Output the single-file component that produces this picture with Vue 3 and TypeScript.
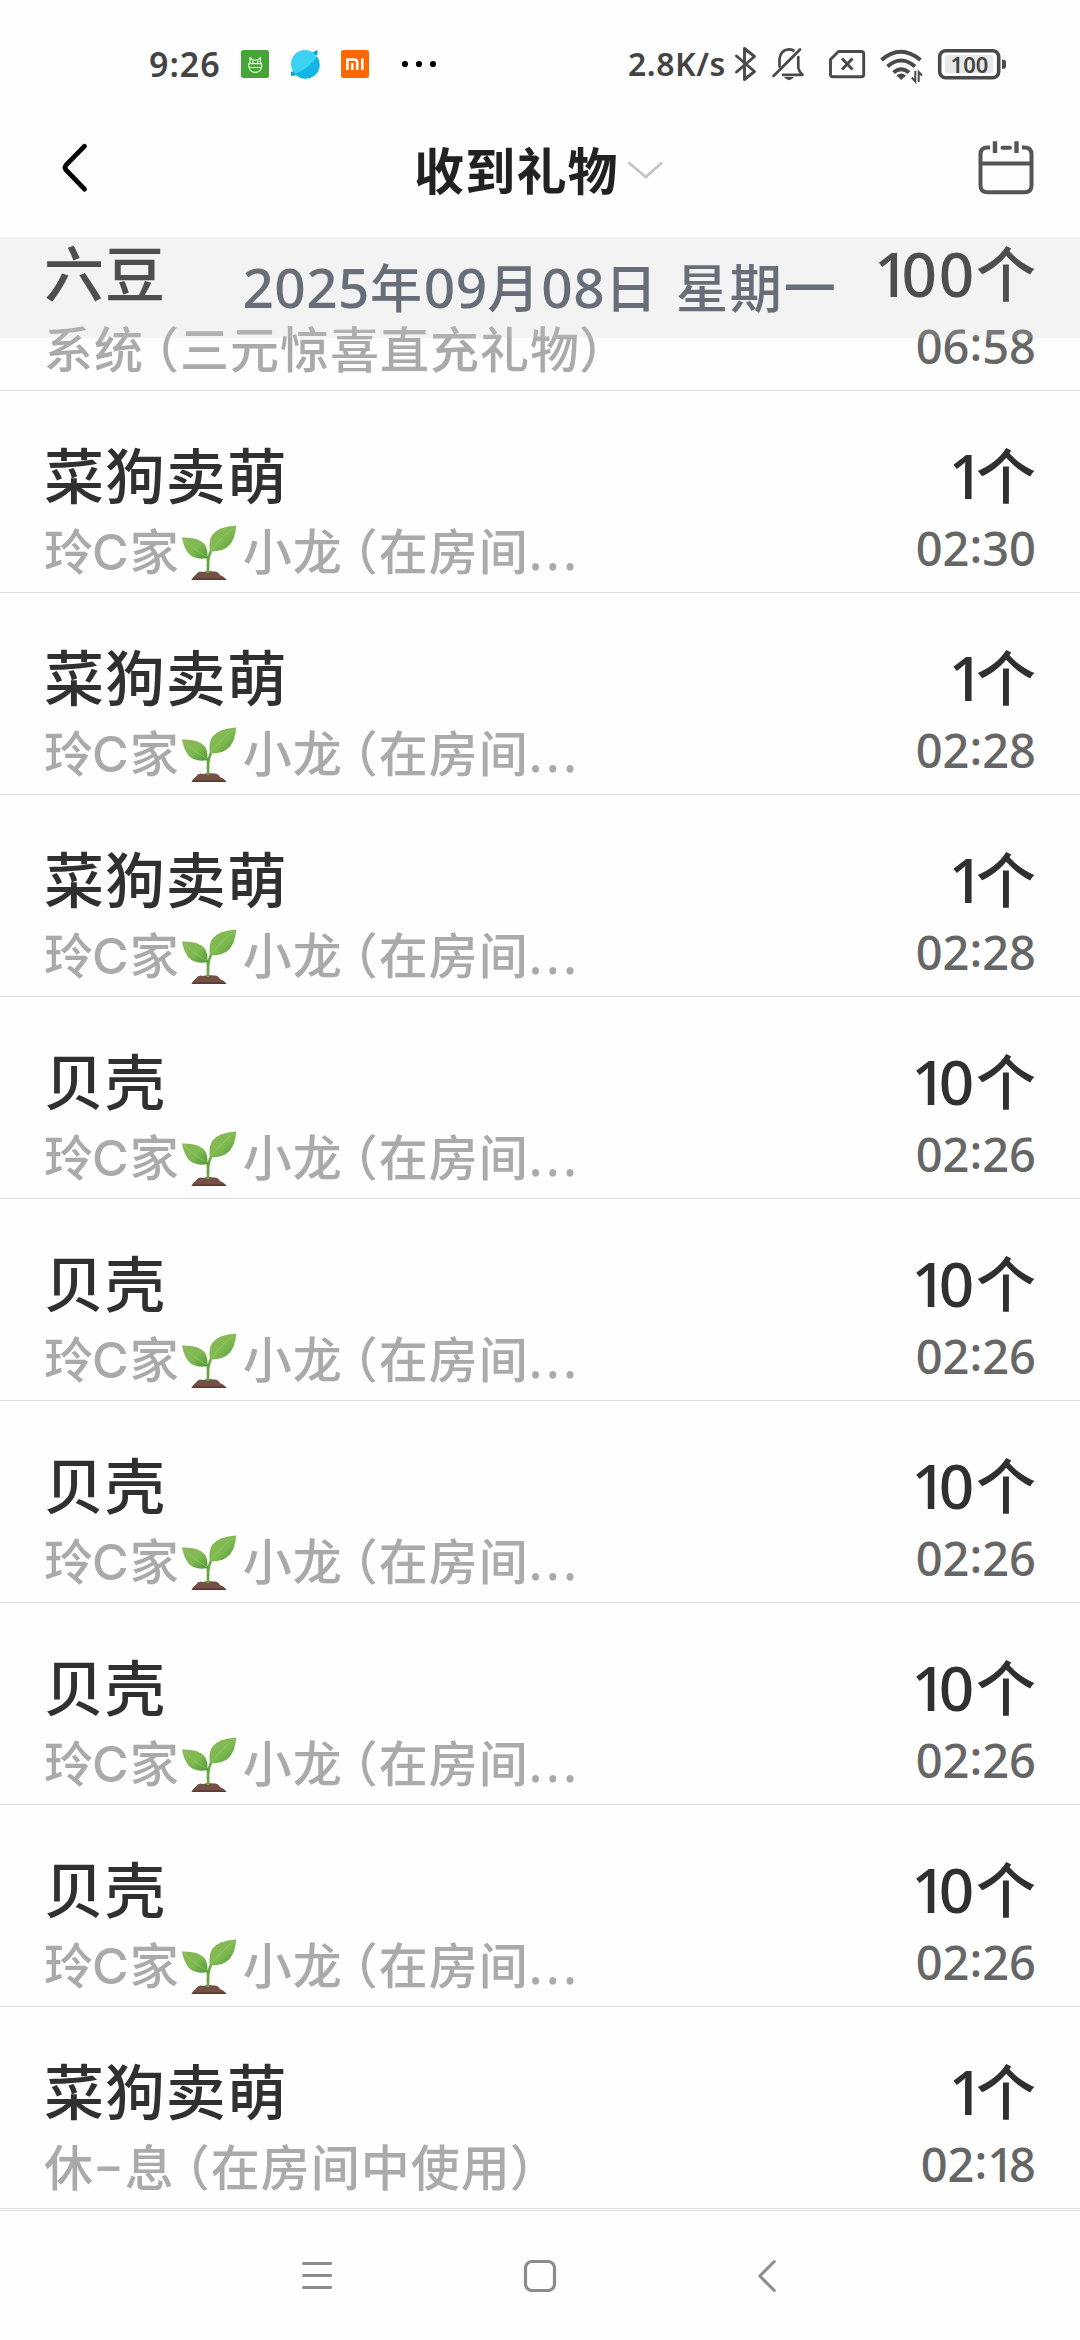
<script setup lang="ts">
interface Gift {
  name: string
  from: string
  count: string
  time: string
}

interface Run {
  kind: 'cjk' | 'num' | 'one' | 'colon' | 'latin' | 'open' | 'close' | 'dots' | 'dash' | 'sprout'
  text: string
}

const farm = '玲C家🌱小龙（在房间...'

const gifts: Gift[] = [
  { name: '六豆', from: '系统（三元惊喜直充礼物）', count: '100个', time: '06:58' },
  { name: '菜狗卖萌', from: farm, count: '1个', time: '02:30' },
  { name: '菜狗卖萌', from: farm, count: '1个', time: '02:28' },
  { name: '菜狗卖萌', from: farm, count: '1个', time: '02:28' },
  { name: '贝壳', from: farm, count: '10个', time: '02:26' },
  { name: '贝壳', from: farm, count: '10个', time: '02:26' },
  { name: '贝壳', from: farm, count: '10个', time: '02:26' },
  { name: '贝壳', from: farm, count: '10个', time: '02:26' },
  { name: '贝壳', from: farm, count: '10个', time: '02:26' },
  { name: '菜狗卖萌', from: '休-息（在房间中使用）', count: '1个', time: '02:18' },
]

function kindOf(ch: string): Run['kind'] {
  if (ch === '🌱') return 'sprout'
  if (ch === '（') return 'open'
  if (ch === '）') return 'close'
  if (ch === '.') return 'dots'
  if (ch === '-') return 'dash'
  if (ch === '1') return 'one'
  if (ch === ':') return 'colon'
  if (/[0-9 ]/.test(ch)) return 'num'
  if (/[A-Za-z]/.test(ch)) return 'latin'
  return 'cjk'
}

// Groups neighbouring characters that share a typeface
function runs(text: string): Run[] {
  const out: Run[] = []
  for (const ch of Array.from(text)) {
    const kind = kindOf(ch)
    const last = out[out.length - 1]
    if (last && last.kind === kind) last.text += ch
    else out.push({ kind, text: ch })
  }
  return out
}

const date = '2025年09月08日 星期一'
</script>

<template>
  <div class="screen">
    <header class="status">
      <span class="clock">9:26</span>
      <svg class="apps" width="200" height="36" viewBox="238 46 200 36">
        <rect x="241" y="50" width="28" height="28" rx="2.5" fill="#45a536" />
        <g fill="none" stroke="#e9f8e4" stroke-width="1.2" stroke-linejoin="round">
          <path d="M250 63.5V57.5L252.500 60H258L260.500 57.500V63.500" />
          <path d="M248.500 63.700H262M248.800 63.700V66Q249.500 72.300 255.300 72.300Q261 72.300 261.700 66V63.700M249 67.500H261.500" />
        </g>
        <circle cx="252.800" cy="61.800" r=".9" fill="#fff" />
        <circle cx="257.800" cy="61.800" r=".9" fill="#fff" />
        <path d="M291 76V72L296 70L300 75Z M317.500 50V54.500L312 58L309 54Z" fill="#159fc9" />
        <circle cx="305" cy="64" r="14" fill="#3cd2f2" />
        <path d="M317 56.500A14 14 0 0 1 295 73.800Q309 69 317 56.500Z" fill="#12b5e5" />
        <rect x="341" y="50" width="28" height="28" rx="2.500" fill="#fb6703" />
        <path d="M347.400 70V59.500H354Q357.200 59.500 357.200 62.500V70M352.300 63V70M362.300 58.300V70" fill="none" stroke="#fff" stroke-width="2.500" />
        <circle cx="405" cy="64" r="3.100" />
        <circle cx="419" cy="64" r="3.100" />
        <circle cx="433" cy="64" r="3.100" />
      </svg>
      <span class="speed">2.8K/s</span>
      <svg width="276" height="40" viewBox="734 44 276 40" fill="none" stroke="#4a4a4a">
        <path d="M736.500 56L754.500 71.500L744.500 79.500V48.500L754.500 56.500L736.500 72" stroke-width="2.900" stroke-linejoin="round" stroke-linecap="round" />
        <g stroke-width="2.700" stroke-linecap="round" stroke-linejoin="round">
          <path d="M773.500 76L800 49.500" />
          <path d="M779.500 66.500V59Q780.500 50 788.500 49.300Q791.500 49.200 793.500 50.500M798.300 57V68Q799 71.500 802.500 74.800H783" />
        </g>
        <path d="M784 77H794Q789 83.500 784 77Z" fill="#4a4a4a" stroke="none" />
        <path d="M838.500 51.500H861.500Q863.700 51.500 863.700 53.700V74.500Q863.700 76.700 861.500 76.700H832.700Q830.500 76.700 830.500 74.500V59.500Z" stroke-width="2.900" stroke-linejoin="round" />
        <path d="M842 58.500L852.500 69.500M852.500 58.500L842 69.500" stroke-width="2.900" />
        <g stroke-width="4">
          <path d="M881.500 60Q900.500 43.500 920.500 60" />
          <path d="M887.500 66.500Q901 54.500 915 66.500" />
          <path d="M893.500 72.500Q901.200 66 909 72.500" />
        </g>
        <path d="M896.500 75.500Q901.200 71.500 906 75.500L901.200 80Z" fill="#4a4a4a" stroke="none" />
        <path d="M915.300 71V81.500L911.800 77.500M918.700 82V72L922 75.500" stroke-width="2" />
        <rect x="945" y="55" width="48" height="18" rx="2" fill="#e8e8e8" stroke="none" />
        <rect x="939.700" y="50.700" width="59" height="27" rx="6" stroke-width="3.600" />
        <path d="M1002 59.500Q1006 59.500 1006 62V66.500Q1006 69 1002 69Z" fill="#4a4a4a" stroke="none" />
        <text class="level" x="969.500" y="73" text-anchor="middle">100</text>
      </svg>
    </header>

    <nav class="appbar">
      <svg class="back" width="30" height="54" viewBox="60 141 30 54">
        <path d="M84.500 146.200L66 165.200Q64 167.500 66 169.800L84.500 189.200" fill="none" stroke="#000" stroke-width="4.800" stroke-linecap="round" />
      </svg>
      <h1 class="title">收到礼物</h1>
      <svg class="caret" width="36" height="20" viewBox="627 160 36 20">
        <path d="M628.500 162.500L645.800 177L662 162.500" fill="none" stroke="#c4c4c4" stroke-width="2.800" />
      </svg>
      <svg class="calendar" width="56" height="56" viewBox="977.500 139 56 56" fill="none" stroke="#555" stroke-width="4">
        <path d="M989.500 146.500H987Q980 146.500 980 153.500V184.500Q980 191.300 987 191.300H1024Q1031 191.300 1031 184.500V153.500Q1031 146.500 1024 146.500H1021.500" />
        <path d="M980 162.500H1031" />
        <path d="M994.500 140.200V152M1016 140.200V152" stroke-width="4.400" />
        <path d="M1002 146.700H1009.500" stroke-linecap="round" />
      </svg>
    </nav>

    <main class="list">
      <section v-for="(g, i) in gifts" :key="i" class="row">
        <div class="left">
          <div class="name">{{ g.name }}</div>
          <div class="from">
            <template v-for="(r, k) in runs(g.from)" :key="k">
              <svg v-if="r.kind === 'sprout'" class="sprout" width="56" height="56" viewBox="0 0 56 56">
                <defs>
                  <linearGradient id="leaf" x1="0" y1="0" x2="1" y2="1">
                    <stop offset="0" stop-color="#8db75a" />
                    <stop offset=".55" stop-color="#7dba50" />
                    <stop offset="1" stop-color="#4f9438" />
                  </linearGradient>
                </defs>
                <path d="M10.500 55Q11.500 52 15 49.500Q17.500 45.500 22 47L27 46L33 46.500Q37 46 39 50Q43.500 51.500 45.500 55Z" fill="#755047" />
                <path d="M10.500 55Q11 53.500 14 53.200H42Q45 53.500 45.500 55Z" fill="#5c3c35" />
                <path d="M26.800 48Q27.800 39 26.500 31M26.800 42Q27 32 30 26" fill="none" stroke="#68a840" stroke-width="2.600" />
                <path d="M1 12.500Q17 12 23 18.500Q27 23 26.500 33Q14 35.500 7.500 28.500Q2.500 22 1 12.500Z" fill="url(#leaf)" />
                <path d="M55.200 .5Q38 1.500 31.500 9.500Q27.500 15 28.700 26.500Q42 27 48.500 20Q54.500 13 55.200 .5Z" fill="url(#leaf)" />
                <path d="M3 14Q12 24 25.500 31.500M53 2.500Q42 10 30 25" fill="none" stroke="#a1ce68" stroke-width=".8" opacity=".7" />
              </svg>
              <span v-else :class="r.kind">{{ r.text }}</span>
            </template>
          </div>
        </div>
        <div class="right">
          <div class="count"><span v-for="(r, k) in runs(g.count)" :key="k" :class="r.kind">{{ r.text }}</span></div>
          <div class="time"><span v-for="(r, k) in runs(g.time)" :key="k" :class="r.kind">{{ r.text }}</span></div>
        </div>
      </section>
      <div class="date"><span v-for="(r, k) in runs(date)" :key="k" :class="r.kind">{{ r.text }}</span></div>
    </main>

    <footer class="keys">
      <svg width="32" height="36" viewBox="301 2257 32 36" stroke="#8c8c8c" stroke-width="2.800" stroke-linecap="round">
        <path d="M303.500 2262.500H330.800M303.500 2274.500H330.800M303.500 2286.500H330.800" />
      </svg>
      <svg class="home" width="36" height="36" viewBox="522 2257 36 36">
        <rect x="525.500" y="2260.500" width="29" height="29" rx="6.500" fill="none" stroke="#8c8c8c" stroke-width="3.200" />
      </svg>
      <svg class="prev" width="22" height="36" viewBox="756 2257 22 36">
        <path d="M774.300 2260.500L759.800 2275L774.300 2289.500" fill="none" stroke="#8c8c8c" stroke-width="3" stroke-linecap="round" stroke-linejoin="round" />
      </svg>
    </footer>
  </div>
</template>

<style>
body {
  margin: 0;
  background: #fff;
}
</style>

<style scoped>
.screen {
  display: flex;
  flex-direction: column;
  width: 1080px;
  height: 2340px;
  overflow: hidden;
  background: #fefefe;
  font-family: 'Noto Sans CJK SC', sans-serif;
}
svg {
  display: block;
  flex: none;
}
.status {
  box-sizing: border-box;
  display: flex;
  align-items: center;
  height: 99px;
  padding: 29px 0 0 149px;
  color: #444;
  font: 600 34px/40px 'Noto Sans', sans-serif;
  white-space: nowrap;
}
.clock {
  width: 89px;
  letter-spacing: 1px;
}
.speed {
  width: 106px;
  margin-left: 190px;
  font-size: 32px;
  letter-spacing: 0.500px;
}
.level {
  fill: #444;
  stroke: none;
  font: 600 22px 'Noto Sans', sans-serif;
}
.appbar {
  display: flex;
  align-items: center;
  height: 138px;
  padding-left: 60px;
}
.title {
  width: 206px;
  margin: 0 0 0 324px;
  color: #222;
  font-size: 50px;
  font-weight: 700;
  line-height: 60px;
  letter-spacing: 1.200px;
  white-space: nowrap;
}
.caret {
  margin: 4px 0 0 7px;
}
.calendar {
  margin-left: 314.500px;
}
.list {
  position: relative;
  height: 1974px;
  overflow: hidden;
}
.row {
  box-sizing: border-box;
  display: flex;
  justify-content: space-between;
  height: 202px;
  padding: 47px 44px 0 44px;
  border-bottom: 1px solid #dedede;
  white-space: nowrap;
}
.row:first-child {
  margin-top: -48px;
}
.name,
.count {
  height: 70px;
  color: #303030;
  font-size: 60px;
  font-weight: 500;
  line-height: 70px;
  letter-spacing: 0.900px;
}
.count {
  text-align: right;
  letter-spacing: 0;
}
.from {
  height: 60px;
  margin-top: 11px;
  color: #aaa;
  font-size: 49px;
  font-weight: 500;
  line-height: 60px;
  letter-spacing: 1px;
}
.time {
  height: 60px;
  margin-top: 10px;
  color: #666;
  font: 500 47px/60px 'Noto Sans', sans-serif;
  text-align: right;
}
.num,
.one,
.colon,
.latin,
.dots,
.dash {
  font-family: 'Noto Sans', sans-serif;
  line-height: 0;
}
.time .colon {
  vertical-align: 3px;
}
.count .num {
  font-size: 62px;
  letter-spacing: 1.800px;
}
.count .one {
  font-size: 62px;
  letter-spacing: -8px;
}
.time .one {
  letter-spacing: -5px;
}
.from .latin {
  margin-left: -2px;
  font-family: Inter, sans-serif;
  font-size: 50px;
  font-weight: 500;
}
.open {
  margin-left: -14px;
}
.close {
  margin-left: -1px;
}
.dots {
  font-size: 50px;
  letter-spacing: 3.700px;
}
.dash {
  display: inline-block;
  margin: 0 7px;
  transform: translateY(-4px) scaleX(1.800);
}
.sprout {
  display: inline-block;
  margin: 0 6px 0 1px;
  vertical-align: -11px;
}
.date {
  position: absolute;
  inset: 0 0 auto;
  box-sizing: border-box;
  height: 101px;
  padding-left: 242.500px;
  background: rgba(200, 200, 200, 0.2);
  color: #676e77;
  font-size: 52px;
  font-weight: 500;
  line-height: 98px;
  letter-spacing: 1.800px;
  white-space: nowrap;
}
.date .num {
  font-size: 55px;
  letter-spacing: 0.400px;
  word-spacing: 2.500px;
}
.keys {
  display: flex;
  align-items: center;
  height: 129px;
  padding-left: 301px;
}
.list::after {
  content: '';
  position: absolute;
  inset: auto 0 0;
  height: 1px;
  background: #dedede;
}
.home {
  margin-left: 189px;
}
.prev {
  margin-left: 198px;
}
</style>
